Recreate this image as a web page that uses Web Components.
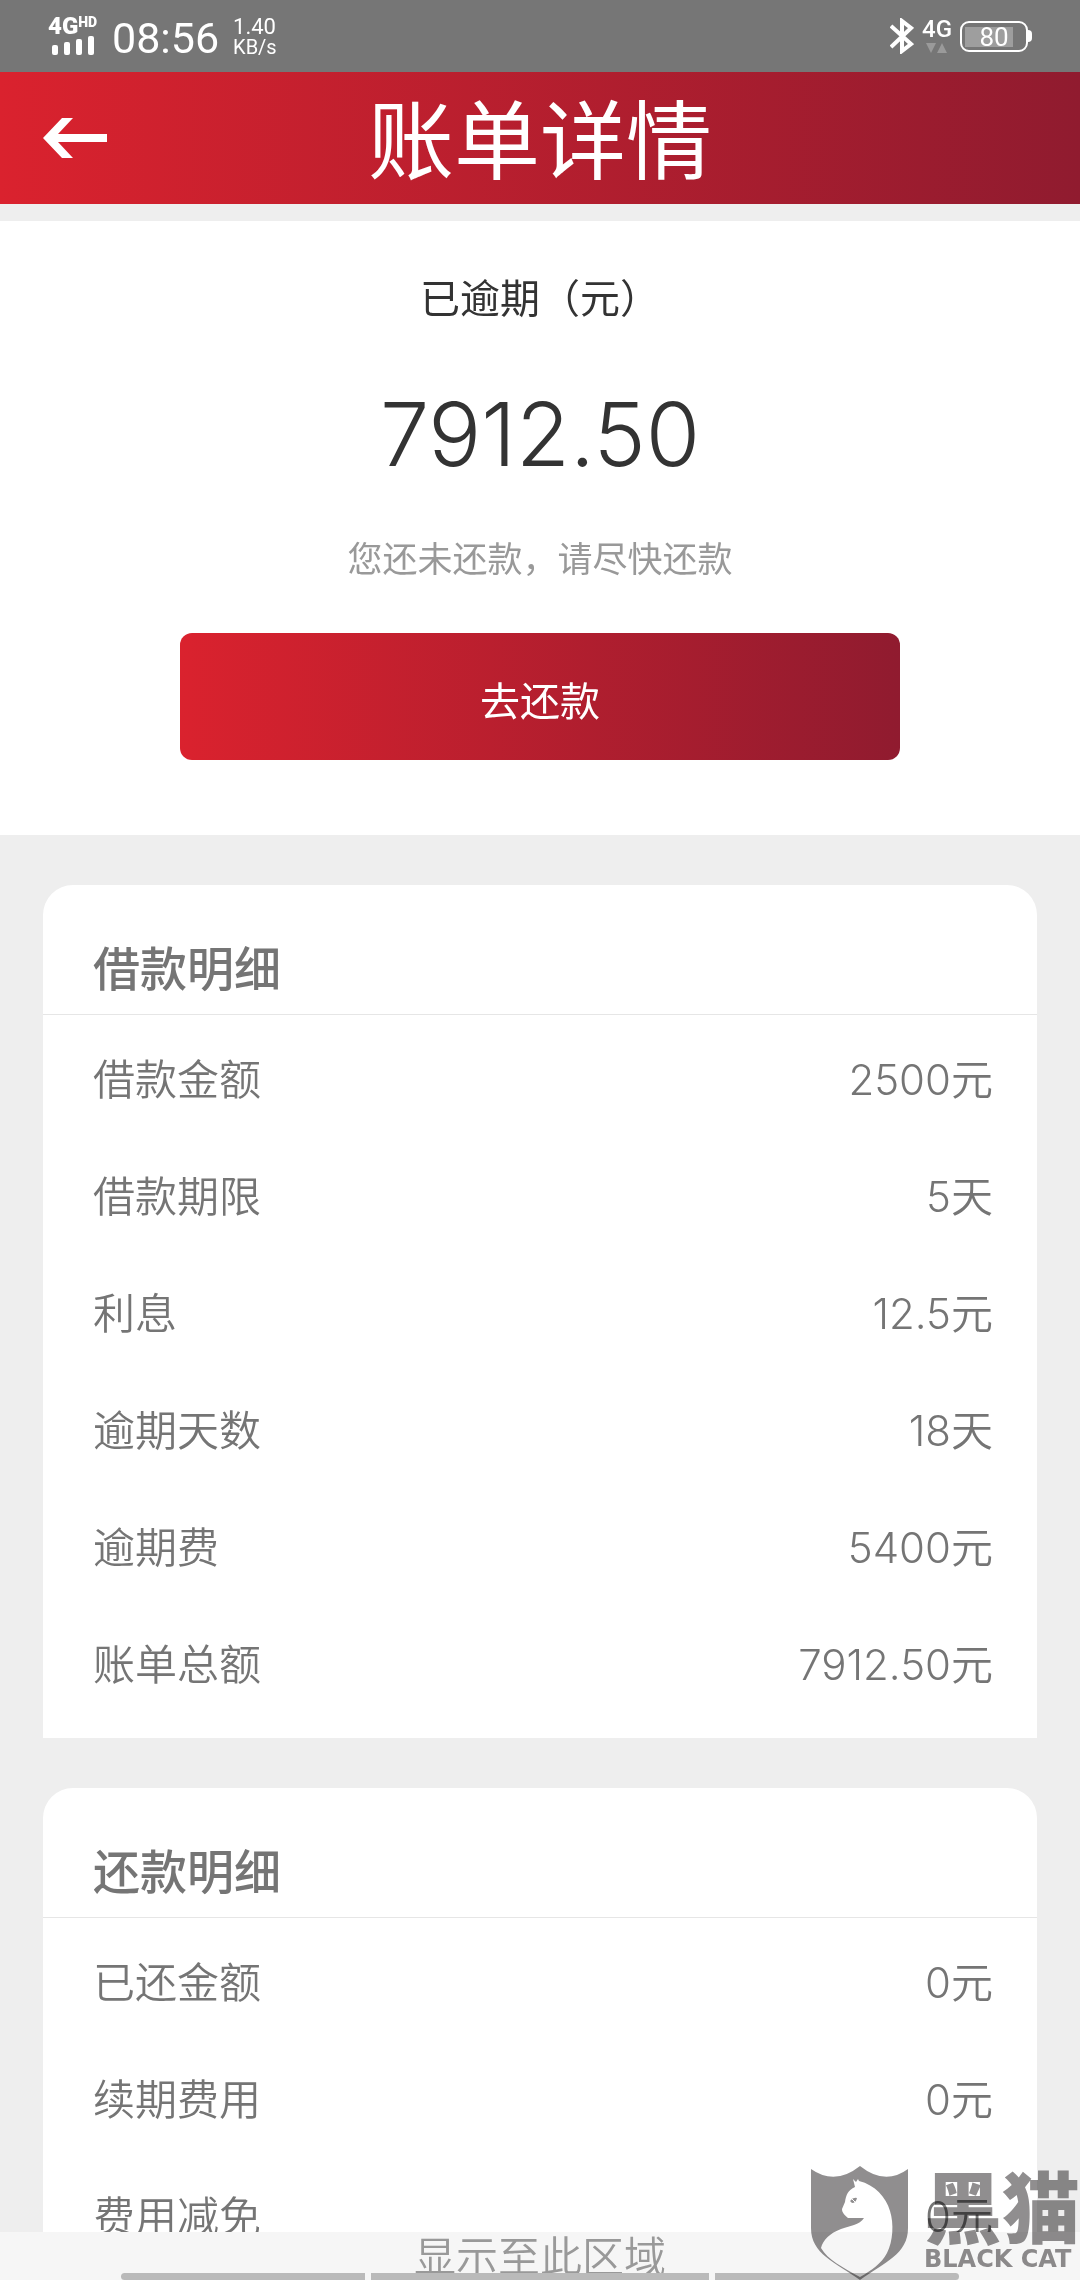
<!DOCTYPE html>
<html lang="zh-CN">
<head>
<meta charset="utf-8">
<meta name="viewport" content="width=device-width, initial-scale=1">
<title>账单详情</title>
<style>
    html, body {
        height: 100%;
        margin: 0;
    }
    body {
        overflow: hidden;
        background: #eee;
        color: #757575;
        font-family: Inter, "Noto Sans CJK SC", sans-serif;
        --brand: linear-gradient(90deg, #da222e, #901b2f);
    }
</style>
</head>
<body>
<bill-app>
    <status-bar slot="top" time="08:56" speed="1.40" battery="80"></status-bar>
    <page-header slot="top">账单详情</page-header>

    <bill-summary amount="7912.50">
        <span slot="label">已逾期（元）</span>
        <span slot="hint">您还未还款，请尽快还款</span>
        <span slot="action">去还款</span>
    </bill-summary>

    <bill-card heading="借款明细">
        <bill-row label="借款金额">2500元</bill-row>
        <bill-row label="借款期限">5天</bill-row>
        <bill-row label="利息">12.5元</bill-row>
        <bill-row label="逾期天数">18天</bill-row>
        <bill-row label="逾期费">5400元</bill-row>
        <bill-row label="账单总额">7912.50元</bill-row>
    </bill-card>

    <bill-card heading="还款明细">
        <bill-row label="已还金额">0元</bill-row>
        <bill-row label="续期费用">0元</bill-row>
        <bill-row label="费用减免">0元</bill-row>
    </bill-card>

    <gesture-bar slot="bottom">显示至此区域</gesture-bar>
    <cat-mark slot="mark"></cat-mark>
</bill-app>

<script>
class BillApp extends HTMLElement {
    constructor() {
        super();
        this.attachShadow({mode: 'open'}).innerHTML = `
        <style>
            :host {
                display: flex;
                flex-direction: column;
                height: 100vh;
                position: relative;
            }
            main {
                flex: 1;
                min-height: 0;
                overflow: hidden;
                padding-top: 17px;
            }
        </style>
        <slot name="top"></slot>
        <main><slot></slot></main>
        <slot name="bottom"></slot>
        <slot name="mark"></slot>`;
    }
}

class StatusBar extends HTMLElement {
    connectedCallback() {
        this.attachShadow({mode: 'open'}).innerHTML = `
        <style>
            :host {
                display: flex;
                justify-content: space-between;
                box-sizing: border-box;
                height: 72px;
                padding: 16px 48px;
                background: #767676;
                color: #fff;
                font-family: Roboto, sans-serif;
            }
            .side { display: flex; align-items: center; }
            .left { gap: 14px; }
            .right { gap: 8px; }
            .net { font-size: 24px; line-height: 20px; font-weight: 900; }
            .net .type { display: flex; align-items: flex-start; }
            .net small { font-size: 14px; line-height: 12px; }
            .net svg, .data svg { display: block; }
            .time { padding-top: 4px; font-size: 43px; line-height: 44px; }
            .speed { padding-top: 2px; font-size: 22px; line-height: 20px; }
            .speed div + div { font-size: 20px; }
            .data { font-size: 24px; line-height: 22px; font-weight: 500; }
            .battery { display: flex; align-items: center; }
            .cell {
                box-sizing: border-box;
                width: 68px;
                height: 31px;
                border: 2px solid #fff;
                border-radius: 9px;
                text-align: center;
                font-size: 26px;
                line-height: 28px;
                background: linear-gradient(#9e9e9e, #9e9e9e) 3px 4px / 48px 20px no-repeat;
            }
            .nub { width: 4px; height: 12px; background: #fff; border-radius: 0 4px 4px 0; }
        </style>
        <div class="side left">
            <div class="net">
                <div class="type">4G<small>HD</small></div>
                <svg width="50" height="20" viewBox="0 0 50 20" fill="#fff">
                    <rect x="4" y="9" width="6" height="10" rx="2"/>
                    <rect x="16" y="6" width="6" height="13" rx="2"/>
                    <rect x="28" y="3" width="6" height="16" rx="2"/>
                    <rect x="40" y="0" width="6" height="19" rx="2"/>
                </svg>
            </div>
            <div class="time">${this.getAttribute('time')}</div>
            <div class="speed"><div>${this.getAttribute('speed')}</div><div>KB/s</div></div>
        </div>
        <div class="side right">
            <svg width="24" height="36" viewBox="0 0 24 36" fill="none" stroke="#fff" stroke-width="4">
                <path d="M1 8 L21 26 L12 33 V3 L21 10 L1 29"/>
            </svg>
            <div class="data">
                <div>4G</div>
                <svg width="28" height="14" viewBox="0 0 28 14" fill="#9a9a9a">
                    <path d="M4 3 H14 L9 13 Z M15 13 H25 L20 3 Z"/>
                </svg>
            </div>
            <div class="battery"><div class="cell">${this.getAttribute('battery')}</div><div class="nub"></div></div>
        </div>`;
    }
}

class PageHeader extends HTMLElement {
    constructor() {
        super();
        this.attachShadow({mode: 'open'}).innerHTML = `
        <style>
            :host {
                display: grid;
                grid-template-columns: 64px 1fr 64px;
                align-items: center;
                height: 132px;
                padding: 0 43px;
                background: var(--brand);
                color: #fff;
            }
            button { padding: 0; border: 0; background: none; }
            svg { display: block; }
            h1 {
                margin: 0;
                padding-top: 8px;
                text-align: center;
                font-size: 86px;
                line-height: 124px;
                font-weight: 400;
            }
        </style>
        <button type="button" aria-label="返回">
            <svg width="64" height="40" viewBox="0 0 64 40" fill="#fff">
                <path d="M0 20 L19 0 H30 L15 16 H64 V24 H15 L30 40 H19 Z"/>
            </svg>
        </button>
        <h1><slot></slot></h1>`;
    }
}

class BillSummary extends HTMLElement {
    connectedCallback() {
        this.attachShadow({mode: 'open'}).innerHTML = `
        <style>
            :host {
                display: flex;
                flex-direction: column;
                align-items: center;
                padding: 48px 0 75px;
                background: #fff;
                color: #333;
            }
            .label { font-size: 40px; line-height: 60px; }
            .amount { margin: 45px 0 40px; font-size: 88px; line-height: 120px; font-weight: 350; }
            .hint { font-size: 35px; line-height: 50px; color: #999; }
            button {
                width: calc(100% - 360px);
                height: 127px;
                margin-top: 49px;
                padding: 10px 0 0;
                border: 0;
                border-radius: 12px;
                background: var(--brand);
                color: #fff;
                font: 400 40px/60px Inter, "Noto Sans CJK SC", sans-serif;
            }
        </style>
        <div class="label"><slot name="label"></slot></div>
        <div class="amount">${this.getAttribute('amount')}</div>
        <div class="hint"><slot name="hint"></slot></div>
        <button type="button"><slot name="action"></slot></button>`;
    }
}

class BillCard extends HTMLElement {
    connectedCallback() {
        this.attachShadow({mode: 'open'}).innerHTML = `
        <style>
            :host {
                display: block;
                margin: 50px 43px 0;
                padding-bottom: 15px;
                background: #fff;
                border-radius: 30px 30px 0 0;
            }
            h2 {
                margin: 0 0 6px;
                padding: 50px 50px 11px;
                border-bottom: 1px solid #e6e6e6;
                font-size: 47px;
                line-height: 68px;
                font-weight: 500;
            }
        </style>
        <h2>${this.getAttribute('heading')}</h2>
        <slot></slot>`;
    }
}

class BillRow extends HTMLElement {
    connectedCallback() {
        this.attachShadow({mode: 'open'}).innerHTML = `
        <style>
            :host {
                display: flex;
                justify-content: space-between;
                padding: 0 44px 0 50px;
                font-size: 42px;
                line-height: 117px;
                font-weight: 350;
            }
        </style>
        <span>${this.getAttribute('label')}</span>
        <span><slot></slot></span>`;
    }
}

class GestureBar extends HTMLElement {
    constructor() {
        super();
        this.attachShadow({mode: 'open'}).innerHTML = `
        <style>
            :host {
                display: flex;
                flex-direction: column;
                height: 48px;
                background: #f6f6f6;
                color: #999;
                text-align: center;
                font-size: 42px;
                line-height: 50px;
                font-weight: 350;
            }
            .text { height: 41px; }
            .pills { display: flex; gap: 6px; padding: 0 121px; }
            .pills i { flex: 1; height: 7px; background: #bababa; }
            .pills i:nth-child(2) { flex: 0 0 338px; }
            .pills i:first-child { border-radius: 4px 0 0 4px; }
            .pills i:last-child { border-radius: 0 4px 4px 0; }
        </style>
        <div class="text"><slot></slot></div>
        <div class="pills"><i></i><i></i><i></i></div>`;
    }
}

class CatMark extends HTMLElement {
    constructor() {
        super();
        // multiplied over the page so the row underneath stays readable
        this.attachShadow({mode: 'open'}).innerHTML = `
        <style>
            :host {
                position: absolute;
                right: 0;
                bottom: 0;
                display: flex;
                gap: 15px;
                color: #908e8f;
                mix-blend-mode: multiply;
            }
            .cn {
                font: 900 78px/76px "Noto Sans CJK SC", sans-serif;
            }
            .en {
                font: 700 24px/34px "DejaVu Sans", sans-serif;
                white-space: nowrap;
            }
        </style>
        <svg width="98" height="114" viewBox="0 0 98 114" fill="currentColor" fill-rule="evenodd">
            <path d="M0 3 Q24 20 49 0 Q74 20 97 3 V62 C97 88 74 96 49 114 C24 96 0 88 0 62 Z
                M42 13 L44 21 C37 24 35 29 34 36 L31 43 C31 47 34 49 37 52 H53 C49 59 38 60 30 63 C19 67 12 74 10 82 C17 94 31 101 49 111 C61 104 70 98 76 87 C82 75 83 58 79 45 C75 31 64 19 48 15 L47 13 L45 16 Z
                M39 35 Q42 31 46 32 Q45 37 41 37 Z"/>
            <path d="M41 33 L44 36" stroke="#fff"/>
        </svg>
        <div>
            <div class="cn">黑猫</div>
            <div class="en">BLACK CAT</div>
        </div>`;
    }
}

customElements.define('bill-app', BillApp);
customElements.define('status-bar', StatusBar);
customElements.define('page-header', PageHeader);
customElements.define('bill-summary', BillSummary);
customElements.define('bill-card', BillCard);
customElements.define('bill-row', BillRow);
customElements.define('gesture-bar', GestureBar);
customElements.define('cat-mark', CatMark);
</script>
</body>
</html>
